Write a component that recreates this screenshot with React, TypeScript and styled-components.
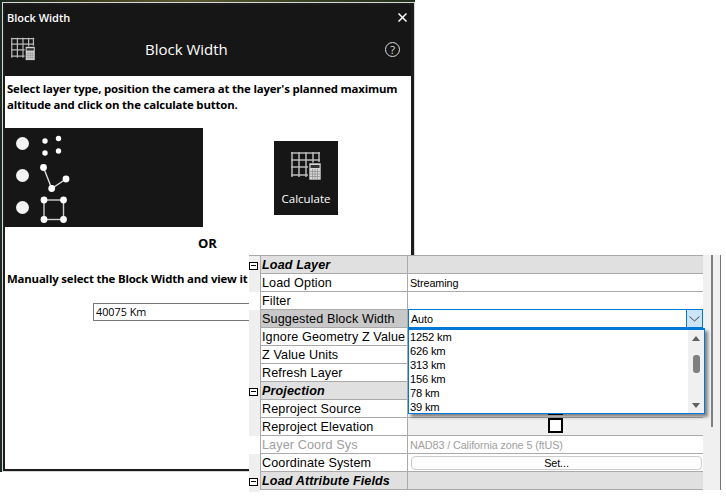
import React from 'react';
import styled, { createGlobalStyle } from 'styled-components';

const GlobalStyle = createGlobalStyle`
  html, body {
    margin: 0;
    padding: 0;
    background: #fff;
    font-family: 'Open Sans', 'Noto Sans', sans-serif;
  }
`;

type Row = {
  label: string;
  value?: string;
  group?: boolean;
  noGutter?: boolean;
  disabled?: boolean;
  kind?: 'combo' | 'check' | 'button';
};

const rows: Row[] = [
  { label: 'Load Layer', group: true },
  { label: 'Load Option', value: 'Streaming' },
  { label: 'Filter', noGutter: true },
  { label: 'Suggested Block Width', value: 'Auto', kind: 'combo' },
  { label: 'Ignore Geometry Z Value' },
  { label: 'Z Value Units' },
  { label: 'Refresh Layer' },
  { label: 'Projection', group: true },
  { label: 'Reproject Source', kind: 'check' },
  { label: 'Reproject Elevation', kind: 'check' },
  {
    label: 'Layer Coord Sys',
    value: 'NAD83 / California zone 5 (ftUS)',
    noGutter: true,
    disabled: true,
  },
  { label: 'Coordinate System', kind: 'button' },
  { label: 'Load Attribute Fields', group: true },
];

const widths = ['1252 km', '626 km', '313 km', '156 km', '78 km', '39 km'];

const GridCalcIcon = ({ size }: { size: number }) => (
  <svg width={size} height={size} viewBox="0 0 30 30" fill="none">
    <g stroke="#b9b9b9" strokeWidth="1.5">
      <path d="M1 1V26M8 1V26M15 1V26M22 1V15M28 1V11" />
      <path d="M0 2H29M0 9H29M0 16H17M0 24H17" />
    </g>
    <rect x="18" y="12" width="12" height="17" fill="#d6d6d6" stroke="#161616" strokeWidth="0.6" />
    <rect x="19.5" y="14" width="9" height="3" fill="#333" />
    <path
      d="M21.5 18V28M24 18V28M26.5 18V28M19 20.5H29M19 23H29M19 25.5H29"
      stroke="#8a8a8a"
      strokeWidth="0.7"
    />
  </svg>
);

const LayerTypeIcons = () => (
  <svg width="30" height="100" viewBox="0 0 30 100">
    <g fill="#fff">
      <circle cx="5" cy="13" r="2.7" />
      <circle cx="18.5" cy="10.5" r="2.7" />
      <circle cx="5" cy="25" r="2.7" />
      <circle cx="18.5" cy="23" r="2.7" />
    </g>
    <path d="M3.5 39.5L11.7 60.5L26 51" stroke="#ddd" strokeWidth="1.4" fill="none" />
    <g fill="#fff">
      <circle cx="3.5" cy="39.5" r="3.4" />
      <circle cx="11.7" cy="60.5" r="3.4" />
      <circle cx="26" cy="51" r="3.4" />
    </g>
    <rect x="4" y="72" width="19.5" height="19.5" stroke="#ccc" strokeWidth="1.4" fill="none" />
    <g fill="#fff">
      <circle cx="4" cy="72" r="3.4" />
      <circle cx="23.5" cy="72" r="3.4" />
      <circle cx="4" cy="91.5" r="3.4" />
      <circle cx="23.5" cy="91.5" r="3.4" />
    </g>
  </svg>
);

const App: React.FC = () => {
  return (
    <>
      <GlobalStyle />
      <Desktop>
        <Window>
          <Header>
            <TitleRow>
              <SmallTitle>Block Width</SmallTitle>
              <CloseIcon width="9" height="9" viewBox="0 0 9 9">
                <path d="M0.5 0.5L8.5 8.5M8.5 0.5L0.5 8.5" stroke="#fff" strokeWidth="1.5" />
              </CloseIcon>
            </TitleRow>
            <HeadRow>
              <GridCalcIcon size={24} />
              <BigTitle>Block Width</BigTitle>
              <HelpIcon>?</HelpIcon>
            </HeadRow>
          </Header>
          <Body>
            <Intro>
              Select layer type, position the camera at the layer's planned maximum altitude and
              click on the calculate button.
            </Intro>
            <PickerRow>
              <TypePicker>
                <RadioColumn>
                  <Radio />
                  <Radio />
                  <Radio />
                </RadioColumn>
                <LayerTypeIcons />
              </TypePicker>
              <CalcButton>
                <GridCalcIcon size={30} />
                <CalcLabel>Calculate</CalcLabel>
              </CalcButton>
            </PickerRow>
            <Or>OR</Or>
            <ManualText>Manually select the Block Width and view it</ManualText>
            <WidthInput>40075 Km</WidthInput>
          </Body>
        </Window>
      </Desktop>

      <Panel>
        <Grid>
          {rows.map((row) => (
            <PropRow key={row.label}>
              <Gutter $blank={row.noGutter}>{row.group && <Collapse />}</Gutter>
              <Label $group={row.group} $disabled={row.disabled} $selected={row.kind === 'combo'}>
                {row.label}
              </Label>
              <Value $group={row.group} $disabled={row.disabled} $shaded={row.kind === 'check'}>
                {row.kind === 'check' ? <Check /> : null}
                {row.kind === 'button' ? <SetButton>Set...</SetButton> : null}
                {row.kind === 'combo' ? (
                  <>
                    <ComboText>{row.value}</ComboText>
                    <ComboArrow>
                      <svg width="11" height="6" viewBox="0 0 11 6">
                        <path d="M0.5 0.5L5.5 5L10.5 0.5" stroke="#444" fill="none" />
                      </svg>
                    </ComboArrow>
                  </>
                ) : (
                  row.kind === undefined && row.value
                )}
              </Value>
            </PropRow>
          ))}
          <LastRow>
            <Gutter />
            <span />
          </LastRow>
        </Grid>
        <SideGap />
        <SideTrack>
          <TrackThumb />
        </SideTrack>

        <DropList>
          <Items>
            {widths.map((w) => (
              <Item key={w}>{w}</Item>
            ))}
          </Items>
          <ListScroll>
            <ArrowUp />
            <Thumb />
            <ArrowDown />
          </ListScroll>
        </DropList>
      </Panel>
    </>
  );
};

export default App;

const Desktop = styled.div`
  width: 415px;
  height: 472px;
  box-sizing: border-box;
  padding: 3px 1px 1px 3px;
  background: linear-gradient(90deg, #1d2a22 0, #3d3f1c 20%, #5a5a30 45%, #3c4522 70%, #23301c 100%);
`;

const Window = styled.div`
  height: 100%;
  box-sizing: border-box;
  display: flex;
  flex-direction: column;
  background: #fff;
  border: 2px solid #1c1c1c;
  border-right-width: 3px;
  box-shadow: 0 0 0 1px #d8d8d8;
`;

const Header = styled.div`
  height: 71px;
  flex: none;
  background: #161616;
  color: #fff;
  display: flex;
  flex-direction: column;
`;

const TitleRow = styled.div`
  height: 25px;
  display: flex;
  align-items: center;
  justify-content: space-between;
  padding: 0 4px 0 2px;
`;

const SmallTitle = styled.span`
  font-size: 11px;
  font-weight: 600;
`;

const CloseIcon = styled.svg`
  display: block;
`;

const HeadRow = styled.div`
  display: flex;
  align-items: center;
  padding: 7px 11px 0 6px;
`;

const BigTitle = styled.span`
  margin-left: 110px;
  font-size: 15px;
`;

const HelpIcon = styled.span`
  margin-left: auto;
  width: 13px;
  height: 13px;
  border: 1px solid #ddd;
  border-radius: 50%;
  display: flex;
  align-items: center;
  justify-content: center;
  font-size: 11px;
  color: #ddd;
`;

const Body = styled.div`
  flex: 1;
  display: flex;
  flex-direction: column;
  padding-top: 5px;
`;

const Intro = styled.p`
  margin: 0;
  padding: 0 2px;
  font-size: 11.4px;
  font-weight: 700;
  letter-spacing: -0.17px;
  line-height: 16px;
  color: #000;
`;

const PickerRow = styled.div`
  display: flex;
  margin-top: 15px;
`;

const TypePicker = styled.div`
  width: 198px;
  height: 99px;
  background: #161616;
  display: flex;
  gap: 11px;
  padding-left: 11px;
  box-sizing: border-box;
`;

const RadioColumn = styled.div`
  display: flex;
  flex-direction: column;
  gap: 19px;
  padding-top: 9px;
`;

const Radio = styled.span`
  width: 13px;
  height: 13px;
  border-radius: 50%;
  background: #f4f4f4;
`;

const CalcButton = styled.div`
  width: 64px;
  height: 74px;
  margin: 13px 0 0 71px;
  background: #161616;
  display: flex;
  flex-direction: column;
  align-items: center;
  padding-top: 10px;
  box-sizing: border-box;
  color: #fff;
`;

const CalcLabel = styled.span`
  margin-top: 10px;
  font-size: 11.5px;
`;

const Or = styled.div`
  margin-top: 7px;
  padding-left: 193px;
  font-size: 13px;
  font-weight: 700;
  line-height: 18px;
`;

const ManualText = styled.div`
  margin-top: 19px;
  padding-left: 2px;
  font-size: 11.4px;
  font-weight: 700;
  letter-spacing: -0.17px;
  line-height: 16px;
  white-space: nowrap;
`;

const WidthInput = styled.div`
  margin: 16px 0 0 88px;
  width: 156px;
  height: 18px;
  box-sizing: border-box;
  border: 1px solid #777;
  border-right: 0;
  padding-left: 2px;
  font-size: 10.8px;
  line-height: 16px;
`;

const Panel = styled.div`
  position: absolute;
  left: 249px;
  top: 255px;
  width: 473px;
  height: 236px;
  display: flex;
  background: #fff;
  font-family: 'Liberation Sans', Arial, sans-serif;
`;

const Grid = styled.div`
  width: 454px;
  border-top: 1px solid #aaa;
  box-sizing: border-box;
  flex: none;
`;

const PropRow = styled.div`
  display: grid;
  grid-template-columns: 11px 148px 1fr;
  height: 18px;
  box-sizing: border-box;
  font-size: 12.6px;
  color: #000;
`;

const LastRow = styled.div`
  height: 2px;
  display: grid;
  grid-template-columns: 11px 1fr;
`;

const Gutter = styled.div<{ $blank?: boolean }>`
  background: ${(p) => (p.$blank ? '#fff' : '#efefef')};
  display: flex;
  align-items: center;
`;

const Collapse = styled.span`
  width: 9px;
  height: 8px;
  box-sizing: border-box;
  border: 1px solid #000;
  position: relative;
  background: #fff;
  margin-top: 1px;
  &::after {
    content: '';
    position: absolute;
    left: 1px;
    right: 1px;
    top: 2px;
    height: 1px;
    background: #000;
  }
`;

const Label = styled.div<{ $group?: boolean; $disabled?: boolean; $selected?: boolean }>`
  padding-left: 1px;
  line-height: 19px;
  border-bottom: 1px solid #aaa;
  border-left: 1px solid #aaa;
  border-right: 1px solid #aaa;
  white-space: nowrap;
  overflow: hidden;
  letter-spacing: 0.12px;
  font-weight: ${(p) => (p.$group ? 700 : 400)};
  font-style: ${(p) => (p.$group ? 'italic' : 'normal')};
  color: ${(p) => (p.$disabled ? '#a0a0a0' : '#000')};
  background: ${(p) => (p.$group ? '#e0e0e0' : p.$selected ? '#c8c8c8' : '#fff')};
`;

const Value = styled.div<{ $group?: boolean; $disabled?: boolean; $shaded?: boolean }>`
  position: relative;
  padding: ${(p) => (p.$shaded ? '1px 0 0' : '1px 0 0 2px')};
  box-sizing: border-box;
  border-bottom: 1px solid #aaa;
  font-size: 10.8px;
  line-height: 16px;
  letter-spacing: -0.1px;
  display: flex;
  align-items: center;
  justify-content: ${(p) => (p.$shaded ? 'center' : 'flex-start')};
  color: ${(p) => (p.$disabled ? '#a0a0a0' : '#000')};
  background: ${(p) => (p.$group ? '#e0e0e0' : p.$shaded ? '#f0f0f0' : '#fff')};
`;

const ComboText = styled.span`
  position: absolute;
  inset: -1px 0 -1px 0;
  border: 1px solid #0078d7;
  padding-left: 2px;
  line-height: 19px;
  background: #fff;
`;

const ComboArrow = styled.span`
  position: absolute;
  right: 0;
  top: -1px;
  bottom: -1px;
  width: 15px;
  background: #cce4f7;
  border: 1px solid #0078d7;
  display: flex;
  align-items: center;
  justify-content: center;
`;

const Check = styled.span`
  width: 15px;
  height: 15px;
  margin-top: -3px;
  box-sizing: border-box;
  border: 2px solid #000;
  background: #fff;
`;

const SetButton = styled.span`
  flex: 1;
  margin: 0 1px 0 1px;
  height: 14px;
  line-height: 13px;
  box-sizing: border-box;
  border: 1px solid #ccc;
  border-radius: 4px;
  text-align: center;
  background: #fdfdfd;
`;

const SideGap = styled.div`
  width: 8px;
  height: 235px;
  background: #f0f0f0;
`;

const SideTrack = styled.div`
  width: 10px;
  background: #f0f0f0;
  border-right: 1px solid #777;
  position: relative;
  height: 235px;
  box-sizing: border-box;
`;

const TrackThumb = styled.span`
  position: absolute;
  left: 0;
  top: 0;
  width: 2px;
  height: 172px;
  background: #808080;
`;

const DropList = styled.div`
  position: absolute;
  left: 159px;
  top: 73px;
  width: 297px;
  height: 86px;
  box-sizing: border-box;
  background: #fff;
  border: 1px solid #0078d7;
  border-top-width: 2px;
  box-shadow: 3px 3px 3px rgba(0, 0, 0, 0.45);
  display: flex;
`;

const Items = styled.div`
  flex: 1;
  padding: 0 0 0 1px;
`;

const Item = styled.div`
  height: 14px;
  line-height: 14px;
  font-size: 11.2px;
  letter-spacing: -0.2px;
`;

const ListScroll = styled.div`
  width: 16px;
  background: #f0f0f0;
  display: flex;
  flex-direction: column;
  align-items: center;
`;

const ArrowUp = styled.span`
  margin-top: 6px;
  width: 0;
  height: 0;
  border-left: 4px solid transparent;
  border-right: 4px solid transparent;
  border-bottom: 5px solid #606060;
`;

const Thumb = styled.span`
  margin-top: 14px;
  width: 7px;
  height: 18px;
  border-radius: 3px;
  background: #808080;
`;

const ArrowDown = styled.span`
  margin-top: auto;
  margin-bottom: 5px;
  width: 0;
  height: 0;
  border-left: 4px solid transparent;
  border-right: 4px solid transparent;
  border-top: 5px solid #606060;
`;
